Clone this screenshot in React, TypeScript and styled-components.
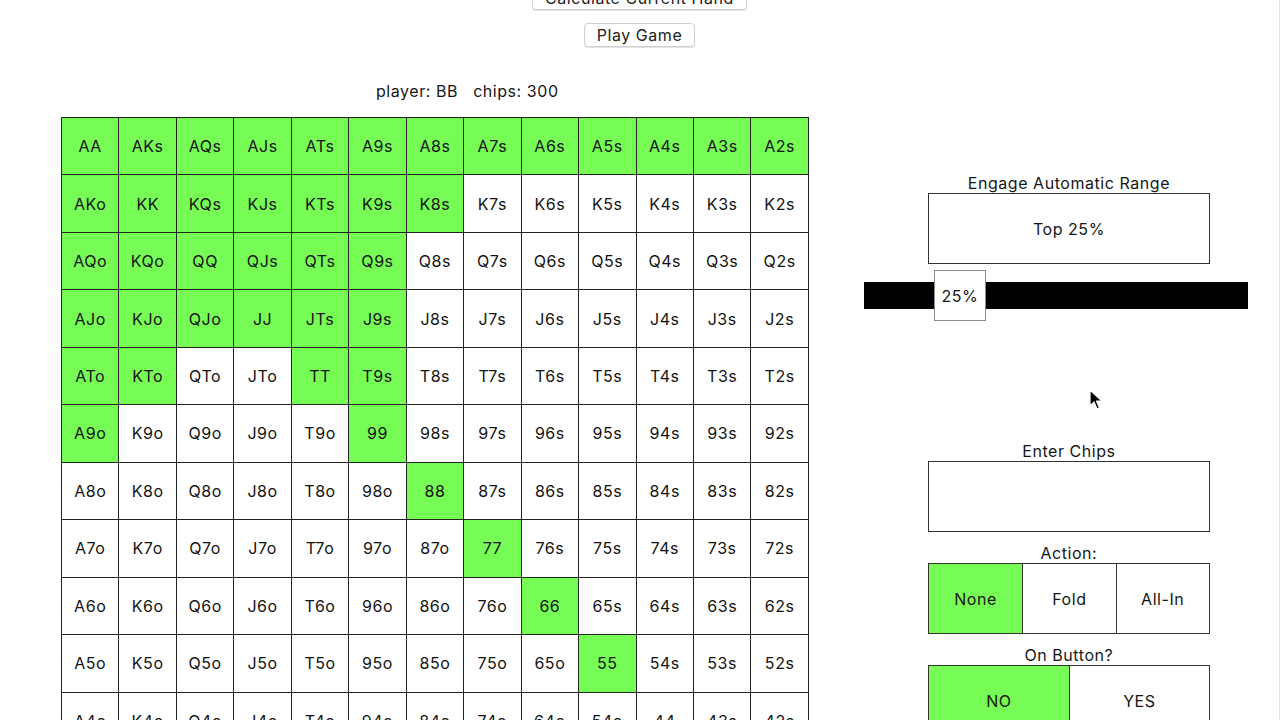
import React from 'react';
import styled, { createGlobalStyle } from 'styled-components';

const GlobalStyle = createGlobalStyle`
  html, body {
    margin: 0;
    padding: 0;
    background: #fff;
    overflow: hidden;
  }
  body {
    font-family: Inter, "Liberation Sans", Arial, sans-serif;
    letter-spacing: 0.55px;
    color: #161616;
  }
`;

const RANKS = ['A', 'K', 'Q', 'J', 'T', '9', '8', '7', '6', '5', '4', '3', '2'];

// cells that are in the selected range, as "row-col"
const SELECTED = new Set<string>([
  ...RANKS.map((_, j) => `0-${j}`),
  '1-0', '1-1', '1-2', '1-3', '1-4', '1-5', '1-6',
  '2-0', '2-1', '2-2', '2-3', '2-4', '2-5',
  '3-0', '3-1', '3-2', '3-3', '3-4', '3-5',
  '4-0', '4-1', '4-4', '4-5',
  '5-0', '5-5',
  '6-6', '7-7', '8-8', '9-9',
]);

function handName(i: number, j: number) {
  if (i === j) return RANKS[i] + RANKS[j];
  if (j > i) return RANKS[i] + RANKS[j] + 's';
  return RANKS[j] + RANKS[i] + 'o';
}

const Page = styled.div`
  position: relative;
  width: 1280px;
  height: 734px;
  margin-top: -14px;
  box-sizing: border-box;
  border-right: 1px solid #e4e4e4;
`;

const TopButtons = styled.div`
  display: flex;
  flex-direction: column;
  align-items: center;
  gap: 13px;
`;

const MacButton = styled.button`
  height: 24px;
  padding: 0 12px;
  background: #fff;
  border: 1px solid #cfcfcf;
  border-radius: 4px;
  box-shadow: 0 1px 1px rgba(0, 0, 0, 0.12);
  font-family: Inter, "Liberation Sans", Arial, sans-serif;
  letter-spacing: 0.55px;
  font-size: 16px;
  line-height: 20px;
  color: #222;
  cursor: pointer;
`;

const InfoLine = styled.div`
  margin-top: 35px;
  padding-left: 376px;
  font-size: 16px;
  line-height: 18px;
  white-space: pre;
`;

const Main = styled.div`
  display: flex;
  margin-top: 17px;
  padding-left: 61px;
`;

const Grid = styled.div`
  display: grid;
  grid-template-columns: repeat(13, 57.46px);
  grid-auto-rows: 57.46px;
  border-top: 1px solid #222;
  border-left: 1px solid #222;
  align-self: flex-start;
`;

const Cell = styled.div<{ $on: boolean }>`
  display: flex;
  align-items: center;
  justify-content: center;
  box-sizing: border-box;
  border-right: 1px solid #222;
  border-bottom: 1px solid #222;
  background: ${p => (p.$on ? '#77fb55' : '#fff')};
  font-size: 16px;
  color: #121212;
`;

const Side = styled.div`
  width: 384px;
  margin-left: 55px;
  padding-top: 57px;
  display: flex;
  flex-direction: column;
`;

const Label = styled.div<{ $gap?: number }>`
  width: 282px;
  margin-left: 64px;
  margin-top: ${p => p.$gap ?? 0}px;
  text-align: center;
  font-size: 16px;
  line-height: 19px;
`;

const Box = styled.div`
  width: 282px;
  height: 71px;
  margin-left: 64px;
  box-sizing: border-box;
  border: 1px solid #333;
  display: flex;
  align-items: center;
  justify-content: center;
  font-size: 16px;
`;

const Track = styled.div`
  position: relative;
  height: 27px;
  margin-top: 18px;
  background: #000;
`;

const Thumb = styled.div`
  position: absolute;
  left: 70px;
  top: -12px;
  width: 52px;
  height: 51px;
  box-sizing: border-box;
  background: #fff;
  border: 1px solid #8a8a8a;
  display: flex;
  align-items: center;
  justify-content: center;
  font-size: 16px;
`;

const Segments = styled.div<{ $cols: number }>`
  width: 282px;
  height: 71px;
  margin-left: 64px;
  box-sizing: border-box;
  border: 1px solid #333;
  display: grid;
  grid-template-columns: repeat(${p => p.$cols}, 1fr);
`;

const Segment = styled.div<{ $on: boolean }>`
  display: flex;
  align-items: center;
  justify-content: center;
  background: ${p => (p.$on ? '#77fb55' : '#fff')};
  font-size: 16px;
  & + & {
    border-left: 1px solid #333;
  }
`;

const Cursor = styled.svg`
  position: absolute;
  left: 1089px;
  top: 403px;
`;

export default function App() {
  return (
    <>
      <GlobalStyle />
      <Page>
        <TopButtons>
          <MacButton>Calculate Current Hand</MacButton>
          <MacButton>Play Game</MacButton>
        </TopButtons>
        <InfoLine>{'player: BB   chips: 300'}</InfoLine>
        <Main>
          <Grid>
            {RANKS.map((_, i) =>
              RANKS.map((__, j) => (
                <Cell key={`${i}-${j}`} $on={SELECTED.has(`${i}-${j}`)}>
                  {handName(i, j)}
                </Cell>
              ))
            )}
          </Grid>
          <Side>
            <Label>Engage Automatic Range</Label>
            <Box>Top 25%</Box>
            <Track>
              <Thumb>25%</Thumb>
            </Track>
            <Label $gap={133}>Enter Chips</Label>
            <Box />
            <Label $gap={12}>Action:</Label>
            <Segments $cols={3}>
              <Segment $on>None</Segment>
              <Segment $on={false}>Fold</Segment>
              <Segment $on={false}>All-In</Segment>
            </Segments>
            <Label $gap={12}>On Button?</Label>
            <Segments $cols={2}>
              <Segment $on>NO</Segment>
              <Segment $on={false}>YES</Segment>
            </Segments>
          </Side>
        </Main>
        <Cursor width="14" height="22" viewBox="0 0 14 22">
          <path
            d="M1 1 L1 17 L5 13 L8 20 L10.5 19 L7.5 12 L13 12 Z"
            fill="#000"
            stroke="#fff"
            strokeWidth="1.2"
            strokeLinejoin="round"
          />
        </Cursor>
      </Page>
    </>
  );
}
